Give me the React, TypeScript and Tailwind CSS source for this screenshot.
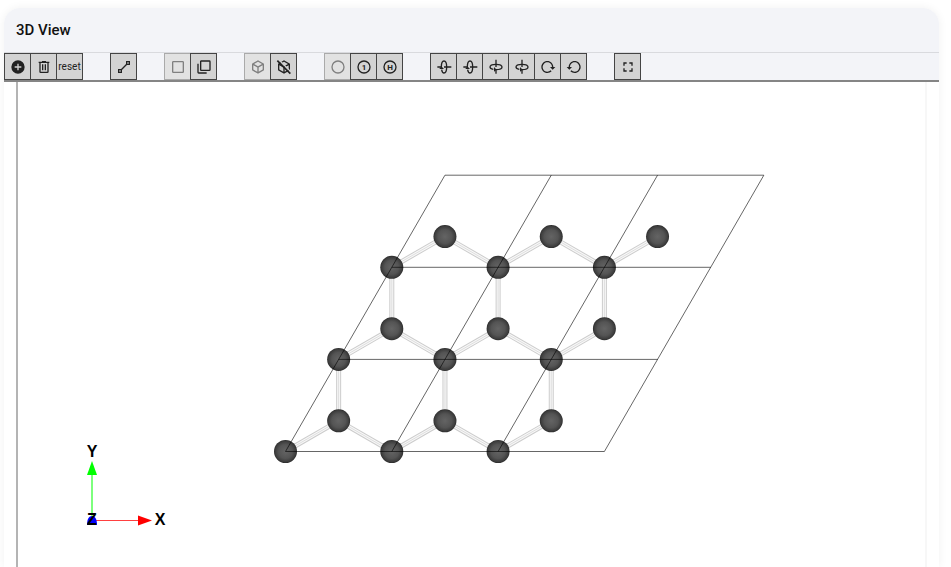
import type { ReactNode } from 'react';

type Tool = { id: string; label: string; icon?: ReactNode; disabled?: boolean };

const path = (d: string, transform?: string) => <path d={d} transform={transform} />;

// Ring around an axis, the arrow head sits on the front side
const spin = (flip: boolean, upright: boolean) => (
  <g
    fill="none"
    stroke="currentColor"
    strokeWidth="2"
    transform={`${upright ? 'rotate(90 12 12)' : ''} ${flip ? 'translate(24 0) scale(-1 1)' : ''}`}
  >
    <path d="M2 12h6M12 12h11" />
    <path d="M8 12c0-5 1.500-9 4-9s4 4 4 9-1.500 9-4 9c-1.800 0-3-2-3.600-5" />
    <path d="M5 15l3-4 4 4z" fill="currentColor" stroke="none" />
  </g>
);

const circled = (char: string) => (
  <>
    <circle cx="12" cy="12" r="9" fill="none" stroke="currentColor" strokeWidth="2" />
    <text x="12" y="16" textAnchor="middle" fontSize="12" fontWeight="700" fontFamily="Roboto, sans-serif">{char}</text>
  </>
);

const CUBE = 'M21,16.5C21,16.88 20.79,17.21 20.47,17.38L12.57,21.82C12.41,21.94 12.21,22 12,22C11.79,22 11.59,21.94 11.43,21.82L3.53,17.38C3.21,17.21 3,16.88 3,16.5V7.5C3,7.12 3.21,6.79 3.53,6.62L11.43,2.18C11.59,2.06 11.79,2 12,2C12.21,2 12.41,2.06 12.57,2.18L20.47,6.62C20.79,6.79 21,7.12 21,7.5V16.5M12,4.15L6.04,7.5L12,10.85L17.96,7.5L12,4.15M5,15.91L11,19.29V12.58L5,9.21V15.91M19,15.91V9.21L13,12.58V19.29L19,15.91Z';
const RELOAD = 'M2 12C2 16.97 6.03 21 11 21C13.39 21 15.68 20.06 17.4 18.4L15.9 16.9C14.63 18.25 12.86 19 11 19C4.76 19 1.64 11.46 6.05 7.05C10.46 2.64 18 5.77 18 12H15L19 16H19.1L23 12H20C20 7.03 15.97 3 11 3C6.03 3 2 7.03 2 12Z';

const GROUPS: Tool[][] = [
  [
    { id: 'add', label: 'Add', icon: path('M17,13H13V17H11V13H7V11H11V7H13V11H17M12,2A10,10 0 0,0 2,12A10,10 0 0,0 12,22A10,10 0 0,0 22,12A10,10 0 0,0 12,2Z') },
    { id: 'delete', label: 'Delete', icon: path('M9,3V4H4V6H5V19A2,2 0 0,0 7,21H17A2,2 0 0,0 19,19V6H20V4H15V3H9M7,6H17V19H7V6M9,8V17H11V8H9M13,8V17H15V8H13Z') },
    { id: 'reset', label: 'reset' },
  ],
  [{ id: 'bond', label: 'Bonds', icon: path('M15,3V7.59L7.59,15H3V21H9V16.42L16.42,9H21V3M17,5H19V7H17M5,17H7V19H5') }],
  [
    { id: 'single', label: 'Single cell', disabled: true, icon: path('M19,3H5C3.89,3 3,3.89 3,5V19A2,2 0 0,0 5,21H19A2,2 0 0,0 21,19V5C21,3.89 20.1,3 19,3M19,5V19H5V5H19Z') },
    { id: 'multiple', label: 'Repeated cells', icon: path('M20,16V4H8V16H20M22,16A2,2 0 0,1 20,18H8C6.89,18 6,17.1 6,16V4C6,2.89 6.89,2 8,2H20A2,2 0 0,1 22,4V16M16,20V22H4A2,2 0 0,1 2,20V7H4V20H16Z') },
  ],
  [
    { id: 'cell', label: 'Show cell', disabled: true, icon: path(CUBE) },
    {
      id: 'no-cell',
      label: 'Hide cell',
      icon: (
        <>
          <path d={CUBE} />
          <path d="M4.500 1.500l18 18" stroke="#d3d3d3" strokeWidth="2" />
          <path d="M2 2.500l19.500 19.500" stroke="currentColor" strokeWidth="2.500" />
        </>
      ),
    },
  ],
  [
    { id: 'plain', label: 'No labels', disabled: true, icon: <circle cx="12" cy="12" r="9" fill="none" stroke="currentColor" strokeWidth="2" /> },
    { id: 'numbers', label: 'Number labels', icon: circled('1') },
    { id: 'symbols', label: 'Symbol labels', icon: circled('H') },
  ],
  [
    { id: 'x-pos', label: 'Rotate around x', icon: spin(false, false) },
    { id: 'x-neg', label: 'Rotate back around x', icon: spin(false, false) },
    { id: 'y-pos', label: 'Rotate around y', icon: spin(true, true) },
    { id: 'y-neg', label: 'Rotate back around y', icon: spin(true, true) },
    { id: 'z-pos', label: 'Rotate clockwise', icon: path(RELOAD) },
    { id: 'z-neg', label: 'Rotate counterclockwise', icon: path(RELOAD, 'translate(24 0) scale(-1 1)') },
  ],
  [{ id: 'fullscreen', label: 'Fullscreen', icon: path('M5,5H10V7H7V10H5V5M14,5H19V10H17V7H14V5M17,14H19V19H14V17H17V14M10,17V19H5V14H7V17H10Z') }],
];

// Lattice of the honeycomb sheet, projected on the screen
const SIZE = 3;
const site = (i: number, j: number): [number, number] => [268.5 + 106.3 * i + 53.15 * j, 369.5 - 92.1 * j];
const basis = (i: number, j: number) => site(i + 1 / 3, j + 1 / 3);

const cells = Array.from({ length: SIZE * SIZE }, (_, n) => [n % SIZE, Math.floor(n / SIZE)]);
const atoms = cells.flatMap(([i, j]) => [site(i, j), basis(i, j)]);
const bonds = cells.flatMap(([i, j]) => {
  const ends = [site(i, j)];
  if (i + 1 < SIZE) ends.push(site(i + 1, j));
  if (j + 1 < SIZE) ends.push(site(i, j + 1));
  return ends.map(end => [...basis(i, j), ...end]);
});
const edges = Array.from({ length: SIZE + 1 }, (_, n) => [
  [...site(0, n), ...site(SIZE, n)],
  [...site(n, 0), ...site(n, SIZE)],
]).flat();

export default function App() {
  return (
    <div className="min-h-screen bg-white pt-2 pr-3 pl-1 font-[Roboto,sans-serif]">
      <section className="flex flex-col overflow-hidden rounded-t-2xl bg-white shadow-[0_0_10px_#0000000f]">
        <header className="flex h-11 items-center bg-[#f3f4f8] px-3">
          <h1 className="text-[15px] font-medium text-[#111]">3D View</h1>
        </header>
        <Toolbar />
        <div className="mx-3 border-r-2 border-l-2 border-r-[#f7f7f7] border-l-[#b4b4b4]">
          <Structure />
        </div>
      </section>
    </div>
  );
}

function Toolbar() {
  return (
    <div className="flex gap-[27px] border-t border-b-2 border-t-[#d9dade] border-b-[#858585] bg-[#f3f4f8]">
      {GROUPS.map(group => (
        <div key={group[0].id} className="flex">
          {group.map(tool => (
            <button
              key={tool.id}
              type="button"
              aria-label={tool.label}
              disabled={tool.disabled}
              className="-ml-px flex h-[27px] w-[27px] items-center justify-center border border-[#444] bg-[#d3d3d3] text-[10px] text-[#222] first:ml-0 disabled:border-[#aaa] disabled:bg-[#e2e2e2] disabled:text-[#808080]"
            >
              {tool.icon ? <svg viewBox="0 0 24 24" className="size-4 shrink-0" fill="currentColor">{tool.icon}</svg> : tool.label}
            </button>
          ))}
        </div>
      ))}
    </div>
  );
}

function Structure() {
  return (
    <svg viewBox="1 0 907 485" className="block w-full" role="img" aria-label="Atomic structure">
      <defs>
        <radialGradient id="atom">
          <stop offset="0" stopColor="#646464" />
          <stop offset="0.6" stopColor="#545454" />
          <stop offset="0.9" stopColor="#3c3c3c" />
          <stop offset="1" stopColor="#2a2a2a" />
        </radialGradient>
      </defs>

      {bonds.map(([x1, y1, x2, y2], n) => (
        <g key={n}>
          <line x1={x1} y1={y1} x2={x2} y2={y2} stroke="#cccccc" strokeWidth="5" />
          <line x1={x1} y1={y1} x2={x2} y2={y2} stroke="#f8f8f8" strokeWidth="3" />
          <line x1={x1} y1={y1} x2={x2} y2={y2} stroke="#dedede" strokeWidth="1" />
        </g>
      ))}
      {atoms.map(([cx, cy], n) => <circle key={n} cx={cx} cy={cy} r="11.5" fill="url(#atom)" />)}
      {edges.map(([x1, y1, x2, y2], n) => (
        <line key={n} x1={x1} y1={y1} x2={x2} y2={y2} stroke="#000" strokeOpacity="0.6" />
      ))}

      {/* Axes */}
      <g fontFamily="'Liberation Sans', sans-serif" fontSize="16" fontWeight="700" textAnchor="middle">
        <line x1="75" y1="438" x2="75" y2="392" stroke="#7dff7d" strokeWidth="2" />
        <path d="M75 379l5 14h-10z" fill="#00ff00" />
        <line x1="76" y1="438.5" x2="121" y2="438.5" stroke="#ff4040" />
        <path d="M135 438.5l-14-5v10z" fill="#ff0000" />
        <path d="M70 443c0-6 2-9 5-9s5 3 5 9z" fill="#0000ff" />
        <text x="75" y="375">Y</text>
        <text x="143" y="443">X</text>
        <text x="75" y="443">Z</text>
      </g>
    </svg>
  );
}
